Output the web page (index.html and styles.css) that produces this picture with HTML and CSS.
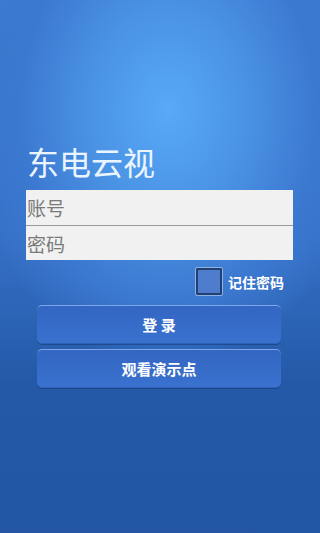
FILE: index.html
```html
<!DOCTYPE html>
<html lang="zh">
<head>
<meta charset="utf-8">
<link rel="stylesheet" href="styles.css">
</head>
<body>
<div class="screen">
  <h1 class="title">东电云视</h1>
  <div class="fields">
    <div class="field">账号</div>
    <div class="field">密码</div>
  </div>
  <div class="remember">
    <span class="box"></span>
    <span class="label">记住密码</span>
  </div>
  <div class="buttons">
    <div class="btn">登 录</div>
    <div class="btn">观看演示点</div>
  </div>
</div>
</body>
</html>
```
FILE: styles.css
```css
html, body {
  margin: 0;
  padding: 0;
}
body {
  width: 320px;
  height: 533px;
  overflow: hidden;
  font-family: "Noto Sans CJK SC", "Noto Sans", sans-serif;
}
.screen {
  width: 320px;
  height: 533px;
  box-sizing: border-box;
  padding: 141px 27px 0 26px;
  display: flex;
  flex-direction: column;
  background:
    radial-gradient(ellipse 200px 260px at 168px 110px, #58a9f8 0%, #4a92e4 40%, #3b78cf 75%, rgba(59,120,207,0) 100%),
    linear-gradient(to bottom, #3b7bd1 0%, #3570c6 45%, #2459a7 72%, #2256a5 100%);
}
.title {
  margin: 0 0 0 1px;
  font-size: 32px;
  font-weight: 400;
  line-height: 40px;
  color: #eaf5ff;
}
.fields {
  margin-top: 9px;
  display: flex;
  flex-direction: column;
  background: #f1f1f1;
}
.field {
  height: 35px;
  line-height: 35px;
  font-size: 19px;
  color: #7a7a7a;
  padding-left: 1px;
}
.field + .field {
  border-top: 1px solid #9a9a9a;
  height: 34px;
}
.remember {
  margin-top: 8px;
  display: flex;
  align-items: center;
  justify-content: flex-end;
  gap: 6px;
  padding-right: 9px;
}
.box {
  width: 22px;
  height: 23px;
  border: 2px solid #233f6e;
  outline: 1px solid #8cb3e8;
  background: #4d7dcc;
  border-radius: 1px;
}
.label {
  font-size: 14px;
  font-weight: 700;
  color: #ffffff;
}
.buttons {
  margin-top: 10px;
  padding: 0 12px 0 11px;
  display: flex;
  flex-direction: column;
  gap: 5px;
}
.btn {
  height: 38px;
  line-height: 38px;
  text-align: center;
  font-size: 15px;
  font-weight: 700;
  color: #ffffff;
  border-radius: 5px;
  background: linear-gradient(to bottom, #3466c3 0%, #3a72cf 100%);
  border-top: 1px solid #7fa6e6;
  box-shadow: 0 1px 0 rgba(20,50,110,0.5), inset 0 -1px 0 rgba(20,60,130,0.3);
}
```
